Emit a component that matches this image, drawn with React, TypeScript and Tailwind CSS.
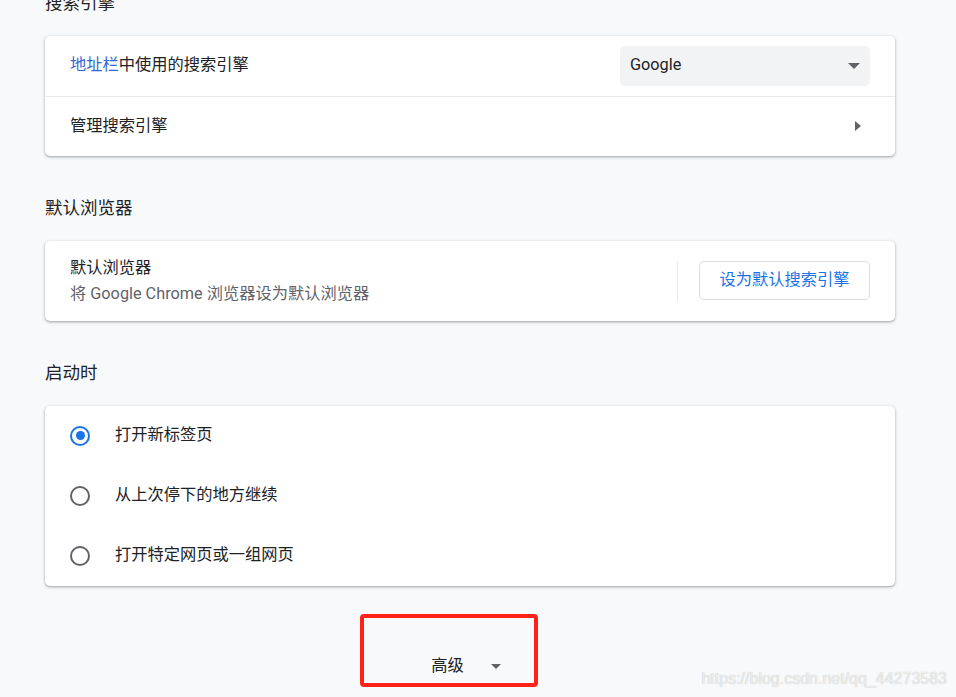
import React from 'react';

const font = { fontFamily: 'Roboto, "Noto Sans CJK SC", sans-serif' };

function Card({ children }: { children: React.ReactNode }) {
  return (
    <div className="bg-white rounded-[5px] shadow-[0_1px_2px_0_rgba(60,64,67,0.3),0_1px_3px_1px_rgba(60,64,67,0.15)]">
      {children}
    </div>
  );
}

function SectionTitle({ text, first }: { text: string; first?: boolean }) {
  return (
    <h2
      className={`text-[17.5px] leading-[24px] h-[24px] font-normal text-[#202124] mb-[20.5px] ${
        first ? '-mt-[9px]' : 'mt-[40.5px]'
      }`}
    >
      {text}
    </h2>
  );
}

function Radio({ checked, label }: { checked?: boolean; label: string }) {
  return (
    <div className="flex items-center h-[60px] px-[25px]">
      <span
        className={`w-5 h-5 rounded-full border-[2.5px] flex items-center justify-center ${
          checked ? 'border-[#1a73e8]' : 'border-[#5f6368]'
        }`}
      >
        {checked && <span className="w-[9px] h-[9px] rounded-full bg-[#1a73e8]" />}
      </span>
      <span className="ml-[25px] text-[16.25px] text-[#202124]">{label}</span>
    </div>
  );
}

export default function App() {
  return (
    <div className="relative h-[697px] overflow-hidden bg-[#f8f9fa]" style={font}>
      <div className="ml-[45px] w-[850px] flex flex-col">
        <SectionTitle text="搜索引擎" first />
        <Card>
          <div className="flex items-center justify-between h-[60px] px-[25px]">
            <span className="text-[16.25px] text-[#202124]">
              <span className="text-[#3367d6]">地址栏</span>中使用的搜索引擎
            </span>
            <div className="flex items-center justify-between w-[250px] h-[40px] pl-[10px] pr-[10px] rounded-[5px] bg-[#f1f3f4]">
              <span className="text-[16.25px] text-[#202124]">Google</span>
              <span className="w-0 h-0 border-l-[6px] border-r-[6px] border-t-[6px] border-l-transparent border-r-transparent border-t-[#5f6368]" />
            </div>
          </div>
          <div className="flex items-center justify-between h-[60px] px-[25px] border-t border-[#e8eaed]">
            <span className="text-[16.25px] text-[#202124]">管理搜索引擎</span>
            <span className="mr-[9px] w-0 h-0 border-t-[5px] border-b-[5px] border-l-[6px] border-t-transparent border-b-transparent border-l-[#5f6368]" />
          </div>
        </Card>

        <SectionTitle text="默认浏览器" />
        <Card>
          <div className="flex items-center h-[80px] px-[25px]">
            <div className="flex-1 flex flex-col">
              <span className="text-[16.25px] leading-[26px] text-[#202124]">默认浏览器</span>
              <span className="text-[16.25px] leading-[26px] text-[#5f6368]">
                将 Google Chrome 浏览器设为默认浏览器
              </span>
            </div>
            <div className="w-px h-[40px] bg-[#e8eaed]" />
            <button className="ml-[21px] w-[171px] h-[39px] rounded-[5px] border border-[#dadce0] bg-white text-[16.25px] text-[#1a73e8]">
              设为默认搜索引擎
            </button>
          </div>
        </Card>

        <SectionTitle text="启动时" />
        <Card>
          <Radio checked label="打开新标签页" />
          <Radio label="从上次停下的地方继续" />
          <Radio label="打开特定网页或一组网页" />
        </Card>

        <div className="relative mt-[28px] h-[80px]">
          <div className="flex justify-center items-center pt-[40px] pr-[8px]">
            <span className="text-[16.25px] leading-[24px] text-[#202124]">高级</span>
            <span className="ml-[27px] mt-[1px] w-0 h-0 border-l-[5px] border-r-[5px] border-t-[5px] border-l-transparent border-r-transparent border-t-[#5f6368]" />
          </div>
          <div className="absolute left-[315px] top-0 w-[178px] h-[73px] border-[4px] border-[#ff2219] rounded-[4px]" />
        </div>
      </div>

      <div
        className="absolute right-[9px] top-[669px] text-[16px] leading-[20px] text-[#eeeeee] [text-shadow:0_0_1px_#b8b8b8]"
        style={{ fontFamily: '"Liberation Sans", Arial, sans-serif' }}
      >
        https://blog.csdn.net/qq_44273583
      </div>
    </div>
  );
}
